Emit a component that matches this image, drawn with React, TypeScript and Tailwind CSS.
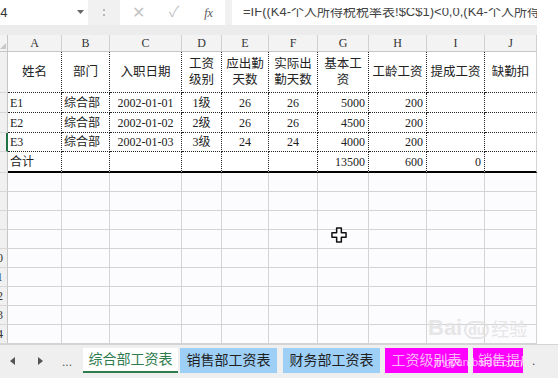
import React from "react";

const colW = [
  "w-[54px]",
  "w-[48px]",
  "w-[72px]",
  "w-[40px]",
  "w-[47px]",
  "w-[49px]",
  "w-[51px]",
  "w-[58px]",
  "w-[58px]",
  "w-[52px]",
];

const letters = ["A", "B", "C", "D", "E", "F", "G", "H", "I", "J"];

const headerRow: string[][] = [
  ["姓名"],
  ["部门"],
  ["入职日期"],
  ["工资", "级别"],
  ["应出勤", "天数"],
  ["实际出", "勤天数"],
  ["基本工", "资"],
  ["工龄工资"],
  ["提成工资"],
  ["缺勤扣"],
];

type Cell = { t?: string; a?: "l" | "c" | "r" };

const dataRows: Cell[][] = [
  [
    { t: "E1", a: "l" },
    { t: "综合部", a: "l" },
    { t: "2002-01-01", a: "c" },
    { t: "1级", a: "c" },
    { t: "26", a: "c" },
    { t: "26", a: "c" },
    { t: "5000", a: "r" },
    { t: "200", a: "r" },
    {},
    {},
  ],
  [
    { t: "E2", a: "l" },
    { t: "综合部", a: "l" },
    { t: "2002-01-02", a: "c" },
    { t: "2级", a: "c" },
    { t: "26", a: "c" },
    { t: "26", a: "c" },
    { t: "4500", a: "r" },
    { t: "200", a: "r" },
    {},
    {},
  ],
  [
    { t: "E3", a: "l" },
    { t: "综合部", a: "l" },
    { t: "2002-01-03", a: "c" },
    { t: "3级", a: "c" },
    { t: "24", a: "c" },
    { t: "24", a: "c" },
    { t: "4000", a: "r" },
    { t: "200", a: "r" },
    {},
    {},
  ],
  [
    { t: "合计", a: "l" },
    {},
    {},
    {},
    {},
    {},
    { t: "13500", a: "r" },
    { t: "600", a: "r" },
    { t: "0", a: "r" },
    {},
  ],
];

const rowH = ["h-[20px]", "h-[20px]", "h-[19px]", "h-[21px]"];

const alignMap = {
  l: "justify-start pl-[2px]",
  c: "justify-center",
  r: "justify-end pr-[3px]",
};

const cellFont = "font-['Liberation_Serif','Noto_Sans_CJK_SC',serif]";

function RowHead({ n, h, active }: { n: number; h: string; active?: boolean }) {
  return (
    <div
      className={`w-[8px] shrink-0 ${h} overflow-hidden bg-[#f0f0f0] border-b border-b-[#d8d8d8] flex items-center ${
        active ? "border-r-2 border-r-[#217346]" : "border-r border-r-[#c6c6c6]"
      }`}
    >
      <div className="w-[22px] shrink-0 -ml-[14px] text-center text-[12px] leading-none text-[#333] font-['Liberation_Serif',serif]">
        {n}
      </div>
    </div>
  );
}

function Cursor() {
  return (
    <svg width="16" height="16" viewBox="-1 -1 17 17" className="absolute left-[331px] top-[227px]">
      <polygon
        points="5,0 10,0 10,5 15,5 15,10 10,10 10,15 5,15 5,10 0,10 0,5 5,5"
        fill="#fff"
        stroke="#111"
        strokeWidth="1.6"
        strokeLinejoin="round"
      />
    </svg>
  );
}

export default function App() {
  return (
    <div className="relative w-[558px] h-[378px] overflow-hidden bg-white flex flex-col font-['Liberation_Sans','Noto_Sans_CJK_SC',sans-serif]">
      <div className="flex h-[344px]">
        <div className="w-[537px] shrink-0 flex flex-col">
          {/* formula bar */}
          <div className="flex h-[25px] bg-[#f1f1f1]">
            <div className="relative w-[88px] bg-white overflow-hidden flex items-center">
              <span className="-ml-[7px] text-[13px] text-[#333]">L4</span>
              <svg width="7" height="4" viewBox="0 0 7 4" className="absolute left-[77px] top-[10px]">
                <polygon points="0,0 7,0 3.5,4" fill="#666" />
              </svg>
            </div>
            <div className="w-[32px] flex flex-col items-center justify-center gap-[3px]">
              <span className="w-[2px] h-[2px] bg-[#b8b8b8]" />
              <span className="w-[2px] h-[2px] bg-[#b8b8b8]" />
            </div>
            <div className="w-[105px] bg-white flex items-center">
              <span className="w-[36px] text-center text-[16px] text-[#c4c4c4]">✕</span>
              <span className="w-[36px] text-center text-[15px] text-[#c4c4c4]">✓</span>
              <span className="w-[33px] text-center text-[12px] italic text-[#555] font-['Liberation_Serif',serif]">fx</span>
            </div>
            <div className="w-[7px]" />
            <div className="flex-1 bg-white overflow-hidden pl-[11px]">
              <div className="mt-[8px] h-[12px] overflow-hidden">
                <div className="-mt-[3px] whitespace-nowrap text-[13px] leading-[13px] text-[#444]">
                  =IF((K4-个人所得税税率表!$C$1)&lt;0,0,(K4-个人所得税税率表
                </div>
              </div>
            </div>
          </div>
          <div className="h-[10px] bg-[#ececec]" />

          {/* column letters */}
          <div className="flex h-[17px] bg-[#f3f3f3] border-b border-[#c6c6c6]">
            <div className="w-[8px] shrink-0 border-r border-[#c6c6c6] relative">
              <svg width="6" height="6" viewBox="0 0 6 6" className="absolute left-0 bottom-[2px]">
                <polygon points="6,0 6,6 0,6" fill="#c8c8c8" />
              </svg>
            </div>
            {letters.map((l, i) => (
              <div
                key={l}
                className={`${colW[i]} shrink-0 border-r border-[#d0d0d0] flex items-center justify-center text-[12px] text-[#333] font-['Liberation_Serif',serif]`}
              >
                {l}
              </div>
            ))}
          </div>

          {/* header row */}
          <div className="flex h-[41px]">
            <RowHead n={1} h="h-[41px]" />
            {headerRow.map((lines, i) => (
              <div
                key={i}
                className={`${colW[i]} shrink-0 bg-white border-b border-dotted border-b-[#222] ${
                  i < 9 ? "border-r border-r-[#222]" : "border-r border-r-[#d4d4d4] [border-right-style:solid]"
                } flex flex-col items-center justify-center text-[12.5px] leading-[16px] text-[#222] ${cellFont}`}
              >
                {lines.map((s) => (
                  <span key={s}>{s}</span>
                ))}
              </div>
            ))}
          </div>

          {/* data rows */}
          {dataRows.map((row, r) => {
            const last = r === dataRows.length - 1;
            return (
              <div key={r} className={`flex ${rowH[r]}`}>
                <RowHead n={r + 2} h={rowH[r]} active={r === 2} />
                {row.map((c, i) => (
                  <div
                    key={i}
                    className={`${colW[i]} shrink-0 bg-white border-dotted ${
                      last ? "border-b-2 border-b-black [border-bottom-style:solid]" : "border-b border-b-[#222]"
                    } ${
                      i < 9 ? "border-r border-r-[#222]" : "border-r border-r-[#d4d4d4] [border-right-style:solid]"
                    } flex items-center ${c.a ? alignMap[c.a] : ""} text-[12px] text-[#222] whitespace-nowrap ${cellFont}`}
                  >
                    {c.t}
                  </div>
                ))}
              </div>
            );
          })}

          {/* empty rows */}
          {Array.from({ length: 9 }).map((_, r) => (
            <div key={r} className="flex h-[19px]">
              <RowHead n={r + 6} h="h-[19px]" />
              {colW.map((w, i) => (
                <div key={i} className={`${w} shrink-0 bg-[#fcfbfe] border-r border-b border-[#d4d4d4]`} />
              ))}
            </div>
          ))}
        </div>
        <div className="flex-1 bg-white" />
      </div>

      {/* sheet tabs */}
      <div className="h-[34px] bg-[#efefef] border-t border-[#d4d4d4] flex items-start pt-[3px] whitespace-nowrap">
        <div className="w-[83px] shrink-0 h-[25px] flex items-center relative">
          <svg width="5" height="8" viewBox="0 0 5 8" className="absolute left-[10px] top-[9px]">
            <polygon points="5,0 5,8 0,4" fill="#555" />
          </svg>
          <svg width="5" height="8" viewBox="0 0 5 8" className="absolute left-[38px] top-[9px]">
            <polygon points="0,0 0,8 5,4" fill="#555" />
          </svg>
          <span className="absolute left-[62px] top-[5px] text-[12px] text-[#555] tracking-[0px]">...</span>
        </div>
        <div className="w-[95px] shrink-0 h-[25px] bg-white border-b-2 border-[#2f7d4f] flex items-center justify-center text-[14px] text-[#2f7d4f]">
          综合部工资表
        </div>
        <div className="ml-[2px] w-[97px] shrink-0 h-[25px] bg-[#9ecff7] flex items-center justify-center text-[14px] text-[#1f1f1f]">
          销售部工资表
        </div>
        <div className="ml-[6px] w-[97px] shrink-0 h-[25px] bg-[#9ecff7] flex items-center justify-center text-[14px] text-[#1f1f1f]">
          财务部工资表
        </div>
        <div className="ml-[5px] w-[83px] shrink-0 h-[25px] bg-[#ff00ff] flex items-center justify-center text-[14px] text-[#f9b8f9]">
          工资级别表
        </div>
        <div className="ml-[5px] w-[50px] shrink-0 h-[25px] bg-[#ff00ff] overflow-hidden flex items-center pl-[5px] text-[14px] text-[#f9b8f9]">
          销售提成表
        </div>
        <span className="ml-[9px] h-[25px] flex items-center text-[12px] text-[#444]">.</span>
      </div>

      <Cursor />

      {/* watermark */}
      <div className="absolute left-[428px] top-[317px] flex items-end gap-[2px] text-[22px] leading-none font-bold text-[#e2e2e2] opacity-80">
        <span>Bai</span>
        <span className="text-[14px] rounded-full border-2 border-[#e2e2e2] px-[2px]">du</span>
        <span className="text-[18px] font-normal">经验</span>
      </div>
      <div className="absolute left-[434px] top-[354px] text-[11px] text-white/70">jingyan.baidu.com</div>
    </div>
  );
}
